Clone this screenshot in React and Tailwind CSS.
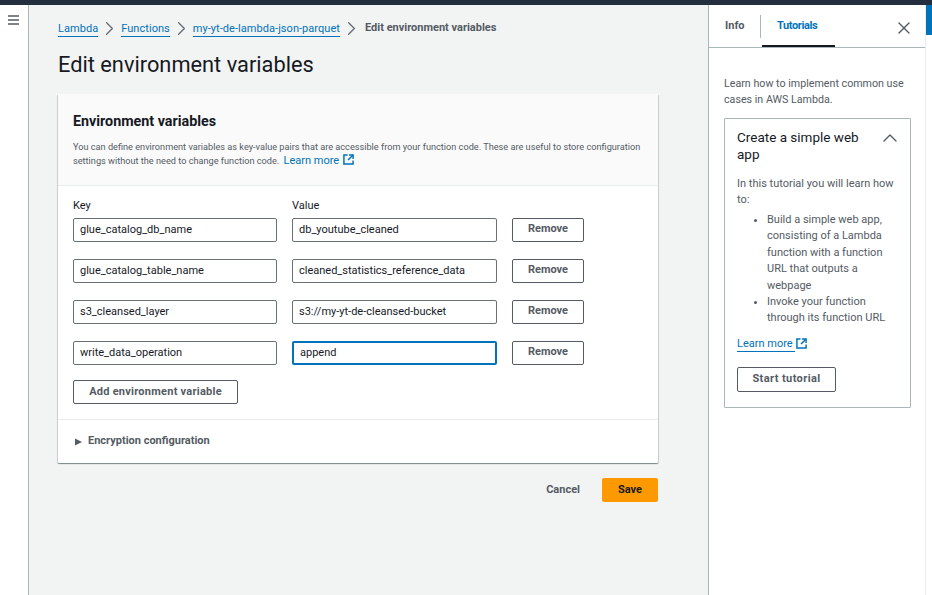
import { X, ChevronUp, ChevronRight } from "lucide-react";

const FONT = { fontFamily: 'Roboto, "Noto Sans", sans-serif' };

const rows = [
  ["glue_catalog_db_name", "db_youtube_cleaned"],
  ["glue_catalog_table_name", "cleaned_statistics_reference_data"],
  ["s3_cleansed_layer", "s3://my-yt-de-cleansed-bucket"],
  ["write_data_operation", "append"],
];

function ExternalIcon({ className }) {
  return (
    <svg viewBox="0 0 12 12" className={className} fill="none" stroke="currentColor" strokeWidth="1.6">
      <path d="M5 1H1v10h10V7" />
      <path d="M6.5 1H11v4.5" />
      <path d="M11 1 5.5 6.5" />
    </svg>
  );
}

function Crumb({ children }) {
  return (
    <>
      <a className="border-b border-[#0073bb] text-[#0073bb] leading-[15px] tracking-[0.05px]">{children}</a>
      <ChevronRight className="h-[23px] w-[23px] text-[#687078]" strokeWidth={1.4} />
    </>
  );
}

function VarRow({ name, value, focused }) {
  return (
    <div className="flex items-center">
      <div className="flex h-[24px] w-[204px] items-center rounded-[2px] border border-[#687078] px-[6px] text-[11px] text-[#16191f]">
        {name}
      </div>
      <div
        className={
          focused
            ? "ml-[15px] flex h-[24px] w-[205px] items-center rounded-[2px] border-2 border-[#0073bb] px-[6px] text-[11px] text-[#16191f]"
            : "ml-[15px] flex h-[24px] w-[205px] items-center rounded-[2px] border border-[#687078] px-[6px] text-[11px] text-[#16191f]"
        }
      >
        {value}
      </div>
      <button className="ml-[15px] flex h-[24px] w-[72px] items-center justify-center rounded-[2px] border border-[#545b64] pb-[3px] text-[11px] font-bold leading-none text-[#545b64]">
        Remove
      </button>
    </div>
  );
}

export default function App() {
  return (
    <div style={FONT} className="flex h-[595px] w-[932px] flex-col overflow-hidden bg-white">
      <div className="h-[5px] bg-[#232f3e]" />
      <div className="flex flex-1">
        <div className="w-[29px] border-r border-[#aab7b8] pl-[8px] pt-[10px]">
          <svg viewBox="0 0 11 10" className="h-[10px] w-[11px]" fill="none" stroke="#545b64" strokeWidth="1.4">
            <path d="M0 1h11M0 5h11M0 9h11" />
          </svg>
        </div>

        <main className="w-[679px] bg-[#f2f3f3] pl-[29px]">
          <nav className="mt-[14px] flex h-[18px] items-center pt-[1px] text-[11px]">
            <Crumb>Lambda</Crumb>
            <Crumb>Functions</Crumb>
            <Crumb>my-yt-de-lambda-json-parquet</Crumb>
            <span className="ml-[2px] font-bold text-[#545b64]">Edit environment variables</span>
          </nav>
          <h1 className="mt-[13px] text-[21.8px] leading-[30px] text-[#16191f]">Edit environment variables</h1>

          <section className="mt-[14px] w-[600px] rounded-[1px] bg-white shadow-[0_1px_1px_0_rgba(0,28,36,0.3),1px_1px_1px_0_rgba(0,28,36,0.15),-1px_1px_1px_0_rgba(0,28,36,0.15)]">
            <div className="h-[92px] border-b border-[#eaeded] bg-[#fafafa] px-[15px] pt-[17px]">
              <h2 className="text-[14.3px] font-bold leading-[20px] text-[#16191f]">Environment variables</h2>
              <p className="mt-[9px] text-[9.18px] leading-[14px] text-[#545b64]">
                You can define environment variables as key-value pairs that are accessible from your function code. These are useful to store configuration
                <br />
                settings without the need to change function code.{" "}
                <a className="ml-[2px] text-[11px] text-[#0073bb]">Learn more</a>
                <ExternalIcon className="ml-[4px] inline h-[11px] w-[11px] align-[-1px] text-[#0073bb]" />
              </p>
            </div>

            <div className="h-[233px] px-[15px] pt-[12px]">
              <div className="flex text-[11px] leading-[15px] text-[#16191f]">
                <span className="w-[219px]">Key</span>
                <span>Value</span>
              </div>
              <div className="mt-[5px] flex flex-col gap-[17px]">
                {rows.map(([name, value], i) => (
                  <VarRow key={name} name={name} value={value} focused={i === 3} />
                ))}
              </div>
              <button className="mt-[15px] flex h-[24px] w-[165px] items-center justify-center rounded-[2px] border border-[#545b64] pb-[2px] text-[11px] font-bold leading-none tracking-[0.25px] text-[#545b64]">
                Add environment variable
              </button>
            </div>

            <div className="flex h-[44px] items-center border-t border-[#eaeded] pl-[17px]">
              <svg viewBox="0 0 8 8" className="h-[8px] w-[7px]" fill="#545b64">
                <path d="M0 0l8 4-8 4z" />
              </svg>
              <span className="ml-[6px] text-[11px] font-bold text-[#545b64]">Encryption configuration</span>
            </div>
          </section>

          <div className="mt-[15px] flex w-[600px] items-center justify-end">
            <span className="text-[11px] font-bold text-[#545b64]">Cancel</span>
            <button className="ml-[22px] h-[24px] w-[56px] rounded-[2px] bg-[#ff9900] text-[11px] font-bold text-[#16191f]">
              Save
            </button>
          </div>
        </main>

        <aside className="relative flex-1 border-l border-[#aab7b8] text-[#545b64]">
          <div className="absolute right-0 top-0 h-full w-[7px] border-l border-[#eaeded] bg-white">
            <div className="h-[30px] bg-[#0073bb]" />
          </div>

          <div className="flex h-[43px] border-b border-[#aab7b8] text-[11px] font-bold">
            <div className="w-[51px] pl-[16px] pt-[13px]">
              <span>Info</span>
            </div>
            <div className="mt-[10px] h-[23px] border-l border-[#aab7b8]" />
            <div className="relative ml-[1px] w-[73px] pl-[15px] pt-[13px] tracking-[-0.4px] text-[#0073bb]">
              <span>Tutorials</span>
              <div className="absolute bottom-0 left-0 h-[2px] w-[73px] bg-[#16191f]" />
            </div>
            <X className="ml-[59px] mt-[13px] h-[20px] w-[20px] text-[#545b64]" strokeWidth={1.6} />
          </div>

          <p className="ml-[15px] mr-[20px] mt-[28px] text-[10.7px] leading-[16px]">
            Learn how to implement common use cases in AWS Lambda.
          </p>

          <div className="ml-[15px] mt-[10px] h-[290px] w-[187px] rounded-[1px] border border-[#aab7b8] pl-[12px] pr-[10px] pt-[10px]">
            <div className="flex items-start justify-between">
              <h3 className="w-[140px] text-[13.5px] leading-[17px] text-[#16191f]">Create a simple web app</h3>
              <ChevronUp className="mr-[-2px] mt-[-3px] h-[24px] w-[24px]" strokeWidth={1.4} />
            </div>
            <p className="mt-[13px] text-[11px] leading-[16px]">In this tutorial you will learn how to:</p>
            <ul className="mt-[4px] list-disc pl-[30px] text-[11px] leading-[16.4px]">
              <li>Build a simple web app, consisting of a Lambda function with a function URL that outputs a webpage</li>
              <li>Invoke your function through its function URL</li>
            </ul>
            <div className="mt-[9px] flex items-center text-[11px] leading-[15px] text-[#0073bb]">
              <a className="border-b border-[#0073bb]">Learn more&nbsp;</a>
              <ExternalIcon className="ml-[1px] h-[11px] w-[11px]" />
            </div>
            <button className="mt-[15px] flex h-[25px] w-[99px] items-center justify-center rounded-[2px] border border-[#545b64] pb-[1px] text-[11px] font-bold leading-none tracking-[0.4px] text-[#545b64]">
              Start tutorial
            </button>
          </div>
        </aside>
      </div>
    </div>
  );
}
